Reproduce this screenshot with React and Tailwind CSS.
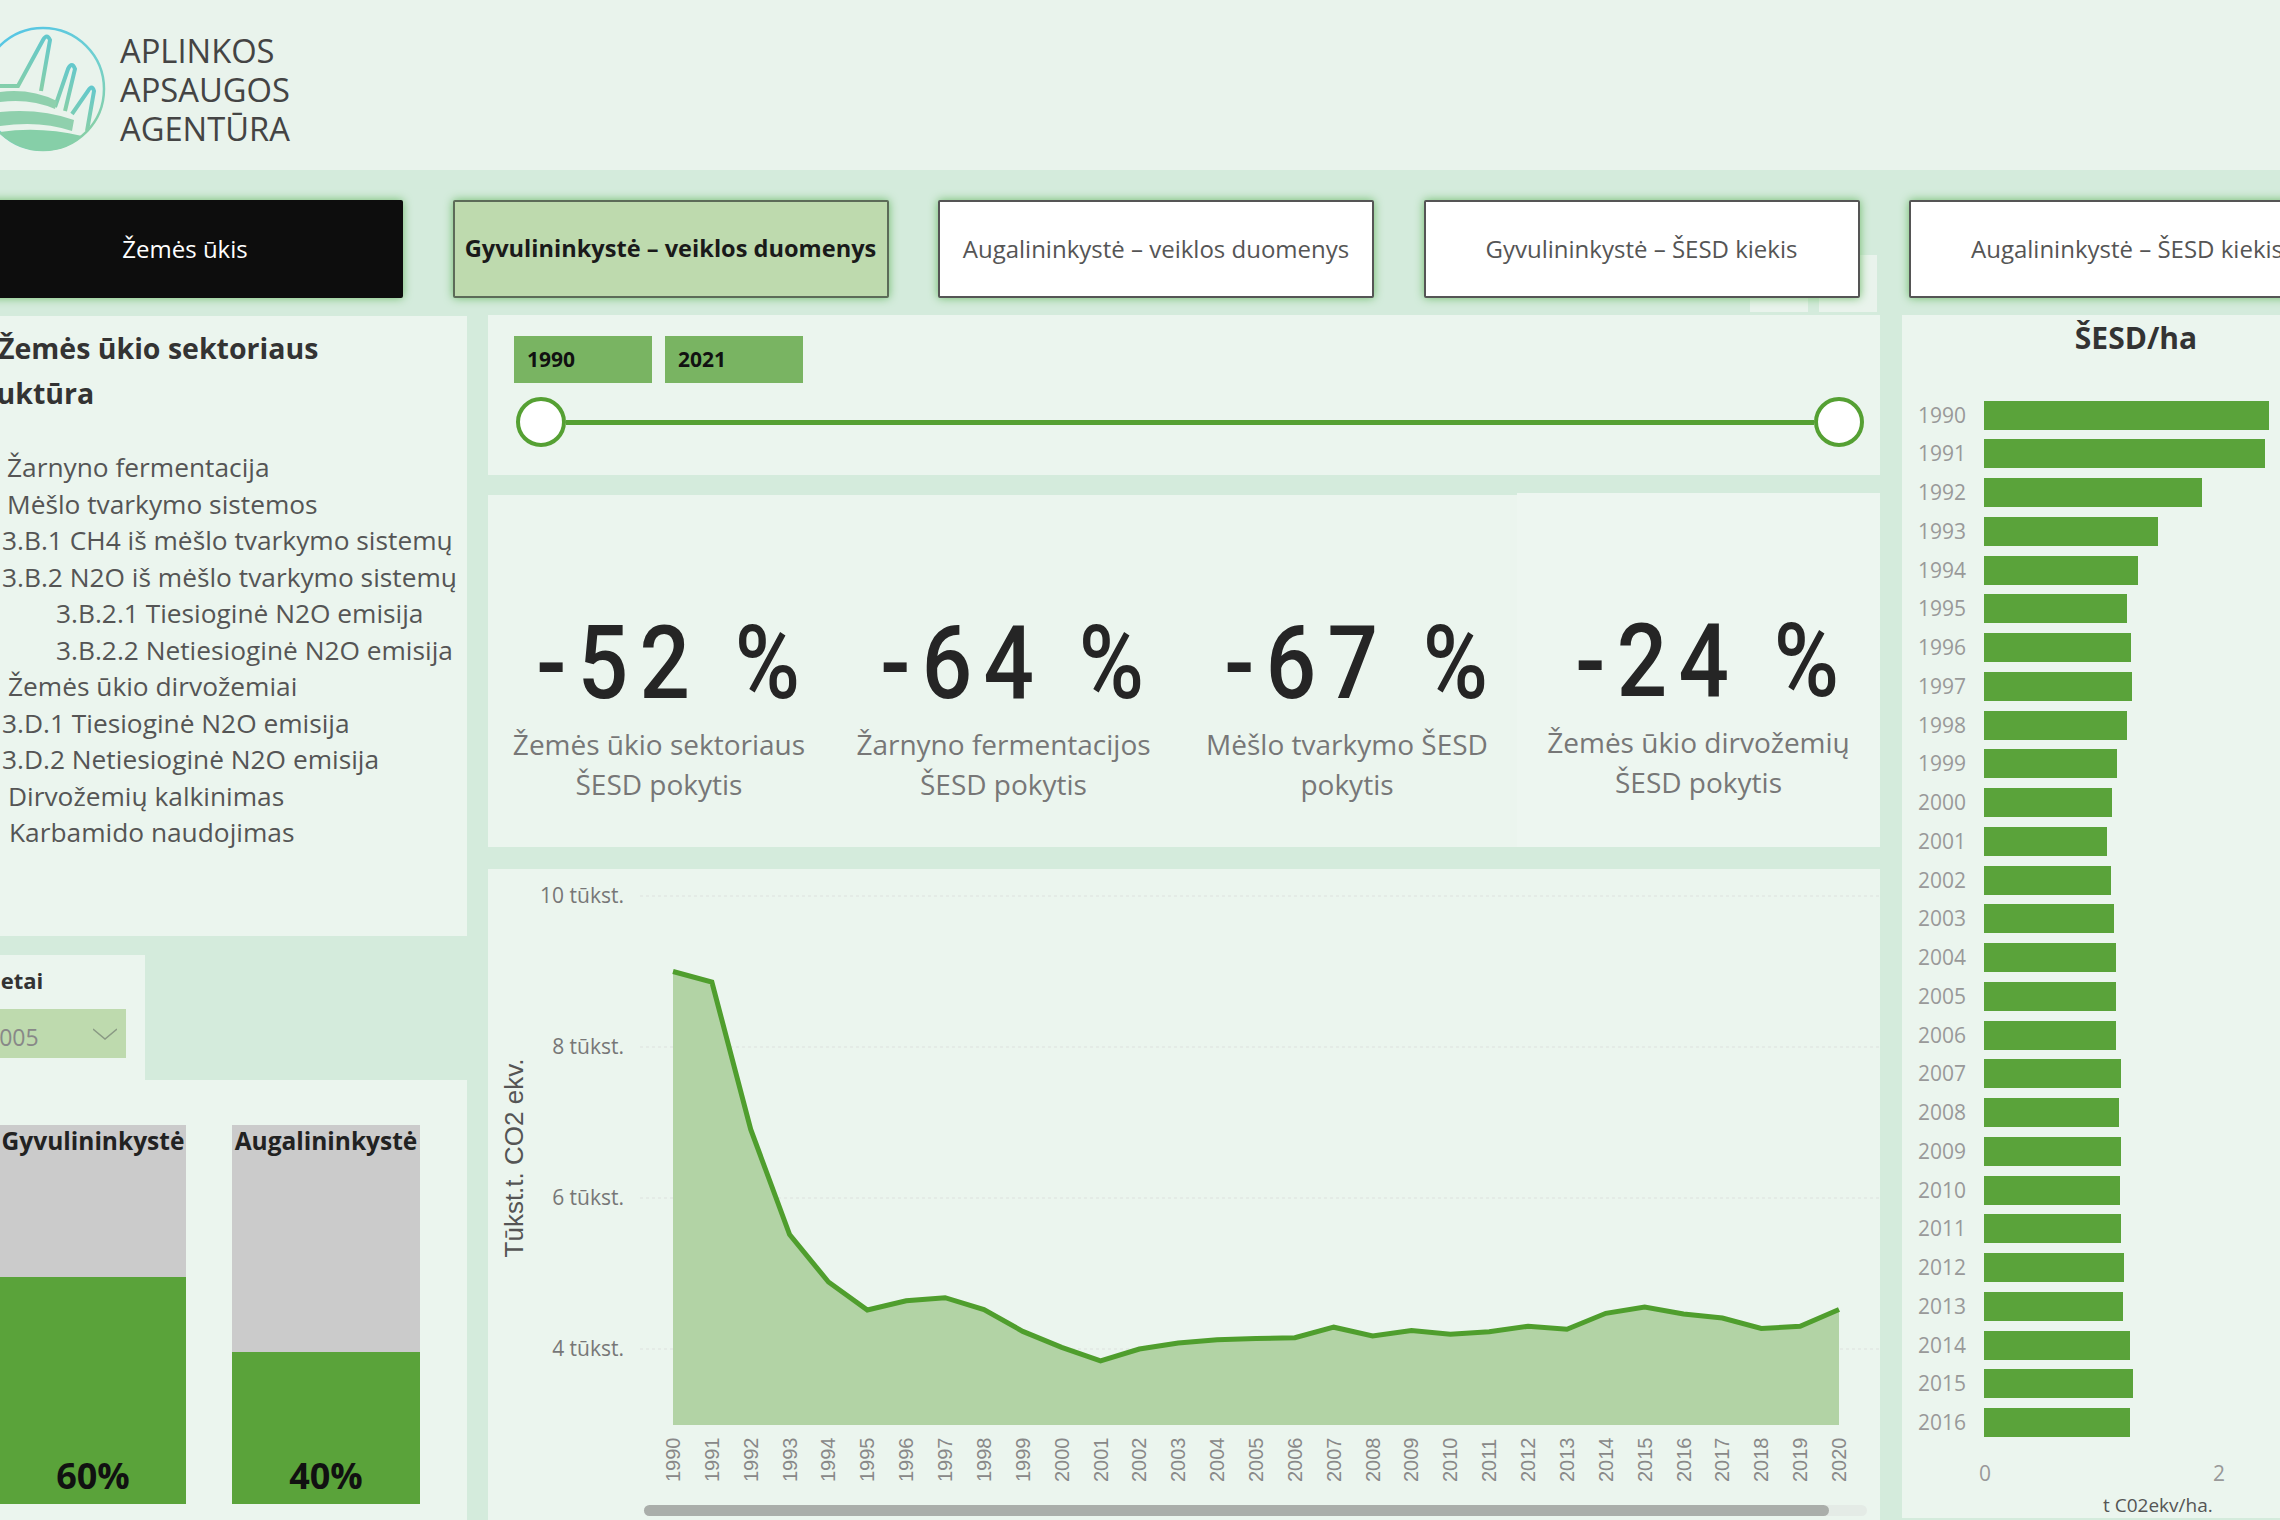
import React from 'react';

const FONT = { fontFamily: '"Open Sans", sans-serif' };

const NAV = [
  { label: 'Žemės ūkis', cls: 'text-[24px] bg-[#0d0d0d] text-white border-[#0d0d0d]' },
  { label: 'Gyvulininkystė – veiklos duomenys', cls: 'text-[23.6px] bg-[#bedaae] text-[#1a1a1a] border-[#5c6b58] font-bold' },
  { label: 'Augalininkystė – veiklos duomenys', cls: 'text-[24px] bg-white text-[#555] border-[#555]' },
  { label: 'Gyvulininkystė – ŠESD kiekis', cls: 'text-[24px] bg-white text-[#555] border-[#555]' },
  { label: 'Augalininkystė – ŠESD kiekis', cls: 'text-[24px] bg-white text-[#555] border-[#555]' },
];

const STRUCTURE = [
  { text: 'Žarnyno fermentacija', pad: 'pl-[7px]' },
  { text: 'Mėšlo tvarkymo sistemos', pad: 'pl-[7px]' },
  { text: '3.B.1 CH4 iš mėšlo tvarkymo sistemų', pad: 'pl-[2px]' },
  { text: '3.B.2 N2O iš mėšlo tvarkymo sistemų', pad: 'pl-[2px]' },
  { text: '3.B.2.1 Tiesioginė N2O emisija', pad: 'pl-[56px]' },
  { text: '3.B.2.2 Netiesioginė N2O emisija', pad: 'pl-[56px]' },
  { text: 'Žemės ūkio dirvožemiai', pad: 'pl-[8px]' },
  { text: '3.D.1 Tiesioginė N2O emisija', pad: 'pl-[2px]' },
  { text: '3.D.2 Netiesioginė N2O emisija', pad: 'pl-[2px]' },
  { text: 'Dirvožemių kalkinimas', pad: 'pl-[8px]' },
  { text: 'Karbamido naudojimas', pad: 'pl-[9px]' },
];

const KPIS = [
  { value: '-52 %', lines: ['Žemės ūkio sektoriaus', 'ŠESD pokytis'], cls: 'w-[342px]' },
  { value: '-64 %', lines: ['Žarnyno fermentacijos', 'ŠESD pokytis'], cls: 'w-[347px]' },
  { value: '-67 %', lines: ['Mėšlo tvarkymo ŠESD', 'pokytis'], cls: 'w-[340px]' },
  { value: '-24 %', lines: ['Žemės ūkio dirvožemių', 'ŠESD pokytis'], cls: 'w-[363px] -mt-[2px] bg-[#edf6f0]' },
];

// y coordinates of the line, in page pixels
const SERIES = [
  971.5, 982, 1129.4, 1234.6, 1282, 1310, 1300.7, 1297.7, 1309.5, 1331.4, 1347.4, 1360.8, 1349, 1343, 1339.8, 1338.5,
  1337.7, 1327.2, 1336, 1330.5, 1334.3, 1331.8, 1326.3, 1329.3, 1313.3, 1307, 1314, 1318, 1328.4, 1326.3, 1309.5,
];

const HA_BARS = [
  285, 281, 218, 174, 154, 143, 147, 148, 143, 133, 128, 123, 127, 130, 132, 132, 132, 137, 135, 137, 136, 137, 140,
  139, 146, 149, 146,
];

const Logo = () => (
  <svg viewBox="0 0 110 130" className="w-[110px] h-[130px] shrink-0">
    <defs>
      <linearGradient id="ring" x1="0" y1="0" x2="0.6" y2="1">
        <stop offset="0" stopColor="#4fc3ea" />
        <stop offset="0.6" stopColor="#6fd0d0" />
        <stop offset="1" stopColor="#86cfa8" />
      </linearGradient>
      <linearGradient id="peaks" x1="0" y1="0" x2="0" y2="1">
        <stop offset="0" stopColor="#63c8cc" />
        <stop offset="1" stopColor="#86cfa8" />
      </linearGradient>
    </defs>
    <circle cx="43" cy="65" r="61" fill="none" stroke="url(#ring)" strokeWidth="2.5" />
    <path d="M0 62 H18 L43 16 Q47 9 50 16 L41 67" fill="none" stroke="url(#peaks)" strokeWidth="4" />
    <path d="M55 83 L68 45 Q72 37 75 45 L65 87" fill="none" stroke="url(#peaks)" strokeWidth="4" />
    <path d="M72 90 L88 67 Q92 60 94 67 L87 107" fill="none" stroke="url(#peaks)" strokeWidth="4" />
    <path d="M0 68 Q30 64 57 77 L55 85 Q30 74 0 78 Z" fill="#8fd0ad" />
    <path d="M0 88 Q40 84 74 96 L72 107 Q40 96 0 102 Z" fill="#8fd0ad" />
    <path d="M0 108 Q40 102 82 112 Q65 127 43 127 Q20 127 0 110 Z" fill="#86cfa8" />
  </svg>
);

const Header = () => (
  <header className="h-[170px] bg-[#e9f3ec] flex items-center pt-[8px]">
    <Logo />
    <div className="ml-[10px] text-[32.7px] leading-[39px] text-[#444]">
      <div>APLINKOS</div>
      <div>APSAUGOS</div>
      <div>AGENTŪRA</div>
    </div>
  </header>
);

const NavRow = () => (
  <nav className="relative h-[145px] pt-[30px] flex gap-[49.5px] -ml-[33px] w-[2400px]">
    {/* visual header icons sticking out from under the buttons */}
    <div className="absolute left-[1783px] top-[85px] w-[58px] h-[57px] bg-[#e9f3ec]" />
    <div className="absolute left-[1852px] top-[85px] w-[58px] h-[57px] bg-[#e9f3ec]" />
    {NAV.map((item) => (
      <div
        key={item.label}
        className={`relative w-[436px] h-[98px] shrink-0 flex items-center justify-center rounded-[2px] border-2 shadow-[0_0_10px_#6fbb6a] ${item.cls}`}
      >
        {item.label}
      </div>
    ))}
  </nav>
);

const LeftColumn = () => (
  <div className="w-[467px] shrink-0 flex flex-col">
    <section className="h-[620px] bg-[#ebf5ee] pt-[10px] mt-[1px] text-[#555]">
      <div className="font-bold text-[28.5px] leading-[44.5px] text-[#333] -ml-[2px]">Žemės ūkio sektoriaus</div>
      <div className="font-bold text-[28.5px] leading-[44.5px] text-[#333] -ml-[43px]">struktūra</div>
      <ul className="mt-[34px] text-[26.3px] leading-[36.5px]">
        {STRUCTURE.map((row) => (
          <li key={row.text} className={`whitespace-nowrap ${row.pad}`}>
            {row.text}
          </li>
        ))}
      </ul>
    </section>
    <section className="mt-[19px] w-[145px] h-[125px] bg-[#ebf5ee] pt-[12px]">
      <div className="font-bold text-[22px] leading-[26px] text-[#333] -ml-[20px]">Metai</div>
      <div className="mt-[16px] w-[126px] h-[49px] bg-[#bedaae] flex items-center pt-[8px]">
        <span className="text-[23px] text-[#888] -ml-[14px]">2005</span>
        <svg viewBox="0 0 24 12" className="w-[24px] h-[12px] ml-auto mr-[9px] -mt-[8px]">
          <polyline points="0,1 12,11 24,1" fill="none" stroke="#8a9a84" strokeWidth="1.5" />
        </svg>
      </div>
    </section>
    <section className="flex-1 bg-[#ebf5ee] pt-[45px] flex gap-[46px] items-start">
      <ShareBar title="Gyvulininkystė" value="60%" green="h-[227px]" width="w-[186px]" />
      <ShareBar title="Augalininkystė" value="40%" green="h-[152px]" width="w-[188px]" />
    </section>
  </div>
);

const ShareBar = ({ title, value, green, width }) => (
  <div className={`${width} h-[379px] bg-[#cbcbcb] flex flex-col justify-between`}>
    <div className="text-center font-bold text-[24.5px] leading-[32px] text-[#222] whitespace-nowrap">{title}</div>
    <div className={`${green} bg-[#5aa33a] flex items-end justify-center pb-[3px]`}>
      <span className="font-bold text-[36px] leading-[50px] text-[#111]">{value}</span>
    </div>
  </div>
);

const SliderPanel = () => (
  <section className="h-[160px] bg-[#ebf5ee] pt-[21px]">
    <div className="flex gap-[13px] pl-[26px]">
      {['1990', '2021'].map((y) => (
        <div key={y} className="w-[138px] h-[47px] bg-[#79b462] pl-[13px] text-[21px] leading-[47px] font-bold text-[#111]">
          {y}
        </div>
      ))}
    </div>
    <div className="mt-[14px] ml-[28px] mr-[16px] flex items-center">
      <div className="w-[50px] h-[50px] rounded-full border-4 border-[#55a033] bg-white shrink-0" />
      <div className="flex-1 h-[5px] bg-[#55a033]" />
      <div className="w-[50px] h-[50px] rounded-full border-4 border-[#55a033] bg-white shrink-0" />
    </div>
  </section>
);

const KpiPanel = () => (
  <section className="mt-[20px] h-[352px] bg-[#ebf5ee] flex items-start">
    {KPIS.map((kpi) => (
      <div key={kpi.value} className={`h-[354px] flex flex-col items-center pt-[118px] ${kpi.cls}`}>
        <div
          className="pl-[34px] text-[102px] leading-[100px] font-medium text-[#252525] tracking-[13px] whitespace-pre scale-x-[0.87]"
          style={{ fontFamily: 'Roboto, sans-serif' }}
        >
          {kpi.value}
        </div>
        <div className="mt-[11px] text-center text-[28px] leading-[40px] text-[#777]">
          {kpi.lines.map((l) => (
            <div key={l}>{l}</div>
          ))}
        </div>
      </div>
    ))}
  </section>
);

const ChartPanel = () => {
  const x = (i) => 673 + (i * (1839 - 673)) / 30;
  const line = SERIES.map((y, i) => `${x(i)},${y}`).join(' ');
  const area = `673,1425 ${line} 1839,1425`;
  const ticks = [
    ['10 tūkst.', 896],
    ['8 tūkst.', 1047],
    ['6 tūkst.', 1198],
    ['4 tūkst.', 1349],
  ];
  return (
    <section className="mt-[22px] flex-1 bg-[#ebf5ee] flex flex-col">
      <svg viewBox="488 869 1392 636" className="w-[1392px] h-[636px] block">
        {ticks.map(([label, y]) => (
          <g key={label}>
            <line x1="640" x2="1880" y1={y} y2={y} stroke="#e4ebe6" strokeWidth="2" strokeDasharray="3 3" />
            <text x="624" y={y + 7} textAnchor="end" fontSize="21" fill="#777" fontFamily="Open Sans, sans-serif">
              {label}
            </text>
          </g>
        ))}
        <text
          transform="translate(523 1158) rotate(-90)"
          textAnchor="middle"
          fontSize="26"
          fill="#555"
          fontFamily="Liberation Sans, sans-serif"
        >
          Tūkst.t. CO2 ekv.
        </text>
        <polygon points={area} fill="#b2d3a5" />
        <polyline points={line} fill="none" stroke="#4f9e2d" strokeWidth="5" />
        {SERIES.map((_, i) => (
          <text
            key={i}
            transform={`translate(${x(i) + 7} 1482) rotate(-90)`}
            fontSize="20"
            fill="#888"
            fontFamily="Liberation Sans, sans-serif"
          >
            {1990 + i}
          </text>
        ))}
      </svg>
      <div className="ml-[156px] w-[1223px] h-[11px] bg-[#e4ebe6] rounded-full">
        <div className="w-[1185px] h-full bg-[#aaaeaa] rounded-full" />
      </div>
    </section>
  );
};

const RightColumn = () => (
  <section className="w-[378px] shrink-0 bg-[#ebf5ee] text-[#999]">
    <div className="pl-[90px] text-center font-bold text-[30px] leading-[46px] text-[#333] whitespace-nowrap">ŠESD/ha</div>
    <div className="mt-[39.5px] flex flex-col gap-[9.76px]">
      {HA_BARS.map((w, i) => (
        <div key={i} className="h-[29px] flex items-center">
          <span className="w-[64px] text-right text-[21px] leading-[27px]">{1990 + i}</span>
          <div className="ml-[18px] h-full bg-[#5aa33a]" style={{ width: w }} />
        </div>
      ))}
    </div>
    <div className="mt-[22px] ml-[77px] w-[246px] flex justify-between text-[21px] leading-[28px]">
      <span>0</span>
      <span>2</span>
    </div>
    <div className="mt-[5px] ml-[201px] text-[19px] leading-[26px] text-[#555] whitespace-nowrap">t C02ekv/ha.</div>
  </section>
);

export default function App() {
  return (
    <div className="w-[2280px] h-[1520px] overflow-hidden bg-[#d4ebdc] flex flex-col" style={FONT}>
      <Header />
      <NavRow />
      <main className="flex-1 min-h-0 flex">
        <LeftColumn />
        <div className="ml-[21px] w-[1392px] shrink-0 flex flex-col">
          <SliderPanel />
          <KpiPanel />
          <ChartPanel />
        </div>
        <div className="ml-[22px]">
          <RightColumn />
        </div>
      </main>
    </div>
  );
}
